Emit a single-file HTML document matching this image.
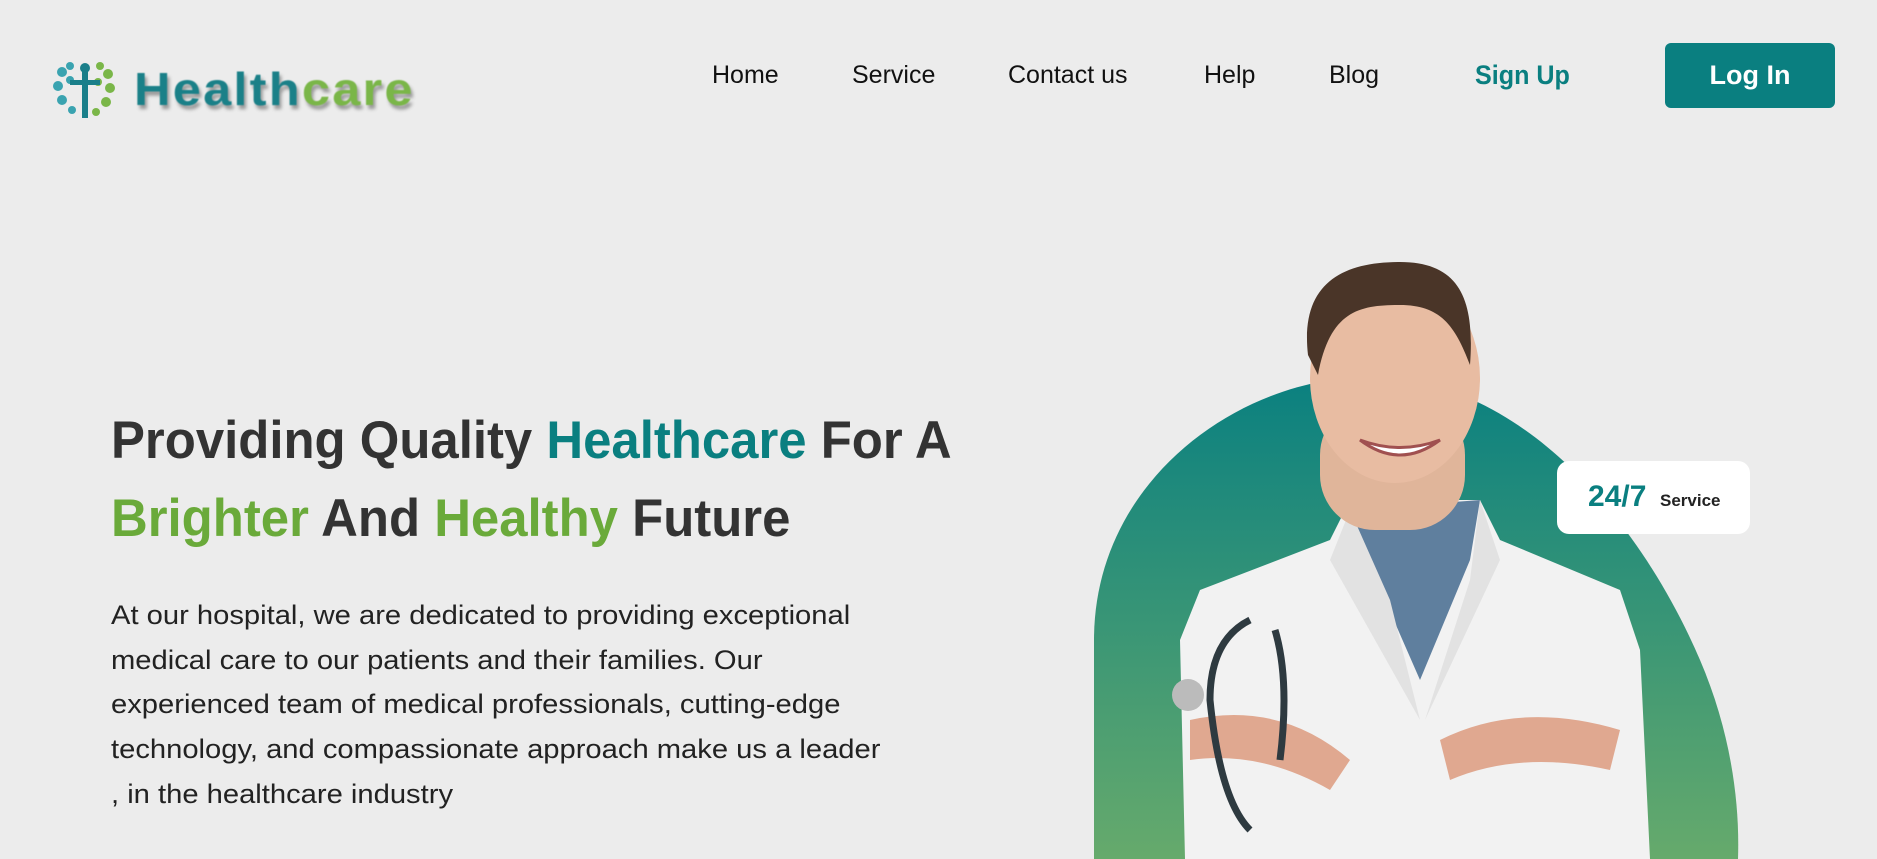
<!DOCTYPE html>
<html><head><meta charset="utf-8"><style>
html,body{margin:0;padding:0;width:1877px;height:859px;overflow:hidden;background:#ececec;font-family:"Liberation Sans",sans-serif;}
.nav a{position:absolute;top:61px;font-size:25px;color:#111;text-decoration:none;transform:scaleX(1);transform-origin:left;}
.su{color:#0a7f80 !important;font-weight:bold;font-size:27px !important;top:60px !important;transform:scaleX(0.93) !important}
.btn{position:absolute;left:1665px;top:43px;width:170px;height:65px;background:#0a7f80;border-radius:6px;color:#fff;font-weight:bold;font-size:27px;text-align:center;line-height:65px;}
h1{position:absolute;left:111px;top:402px;margin:0;font-size:53px;line-height:78px;color:#333;white-space:nowrap;transform:scaleX(0.96);transform-origin:left;font-weight:bold;}
.t{color:#0a7f80}.g{color:#6aaa3a}
p{position:absolute;left:111px;top:593px;margin:0;font-size:27px;line-height:44.7px;color:#222;white-space:nowrap;transform:scaleX(1.08);transform-origin:left;}
</style></head><body>
<svg style="position:absolute;left:50px;top:58px" width="70" height="65" viewBox="0 0 70 65">
<g fill="#3aa3b0"><circle cx="12" cy="14" r="5"/><circle cx="8" cy="28" r="5"/><circle cx="12" cy="42" r="5"/><circle cx="20" cy="8" r="4"/><circle cx="22" cy="52" r="4"/><circle cx="20" cy="22" r="4"/></g>
<g fill="#7ab648"><circle cx="50" cy="8" r="4"/><circle cx="58" cy="16" r="5"/><circle cx="60" cy="30" r="5"/><circle cx="56" cy="44" r="5"/><circle cx="46" cy="54" r="4"/><circle cx="48" cy="24" r="4"/></g>
<rect x="32" y="10" width="6" height="50" fill="#1a7f8a"/><rect x="20" y="22" width="30" height="5" fill="#1a7f8a"/><circle cx="35" cy="10" r="5" fill="#1a7f8a"/>
</svg>
<div style="position:absolute;left:134px;top:62px;font-size:46px;font-weight:bold;letter-spacing:2px;transform:scaleX(1.1);transform-origin:left;text-shadow:2px 4px 3px #999;filter:blur(0.6px)"><span style="color:#1a8088">Health</span><span style="color:#7ab648">care</span></div>
<div class="nav">
<a style="left:712px">Home</a><a style="left:852px">Service</a><a style="left:1008px">Contact us</a><a style="left:1204px">Help</a><a style="left:1329px">Blog</a><a class="su" style="left:1475px">Sign Up</a>
</div>
<div class="btn">Log In</div>
<h1>Providing Quality <span class="t">Healthcare</span> For A<br><span class="g">Brighter</span> And <span class="g">Healthy</span> Future</h1>
<p>At our hospital, we are dedicated to providing exceptional<br>medical care to our patients and their families. Our<br>experienced team of medical professionals, cutting-edge<br>technology, and compassionate approach make us a leader<br>, in the healthcare industry</p>
<svg style="position:absolute;left:0;top:0" width="1877" height="859">
<defs><linearGradient id="bg" x1="0" y1="0" x2="0" y2="1"><stop offset="0" stop-color="#0a8080"/><stop offset="1" stop-color="#66aa6c"/></linearGradient></defs>
<path d="M1094 859 L1094 640 C1094 480 1240 377 1370 377 C1520 377 1640 520 1700 660 C1730 730 1740 800 1738 859 Z" fill="url(#bg)"/>
<path d="M1350 500 L1480 500 L1500 540 L1620 590 L1640 650 L1650 859 L1185 859 L1180 640 L1200 590 L1330 540 Z" fill="#f2f2f2"/>
<path d="M1350 510 L1480 500 L1470 560 L1420 680 L1385 600 Z" fill="#5f7f9e"/>
<path d="M1350 510 L1330 560 L1420 720 L1390 600 Z M1480 500 L1500 560 L1425 720 L1470 580 Z" fill="#e2e2e2"/>
<rect x="1320" y="400" width="145" height="130" rx="55" fill="#e0b59a"/>
<ellipse cx="1395" cy="378" rx="85" ry="105" fill="#e8bca2"/>
<path d="M1308 355 C1300 285 1340 262 1400 262 C1460 262 1475 300 1470 365 C1455 325 1440 305 1400 305 C1360 305 1330 310 1318 375 Z" fill="#4a3528"/>
<path d="M1360 440 Q1400 470 1440 440 Q1400 455 1360 440 Z" fill="#fff" stroke="#a05050" stroke-width="3"/>
<path d="M1190 720 Q1280 700 1350 760 L1330 790 Q1260 750 1190 760 Z M1440 740 Q1520 700 1620 730 L1610 770 Q1520 750 1450 780 Z" fill="#e0a890"/>
<path d="M1250 620 Q1210 640 1210 700 Q1220 800 1250 830 M1275 630 Q1290 680 1280 760" fill="none" stroke="#2e3a40" stroke-width="7"/>
<circle cx="1188" cy="695" r="16" fill="#bbb"/>
<rect x="1557" y="461" width="193" height="73" rx="12" fill="#fff"/>
<text x="1588" y="506" font-family="Liberation Sans" font-weight="bold" font-size="30" fill="#0a7f80">24/7</text>
<text x="1660" y="506" font-family="Liberation Sans" font-weight="bold" font-size="17" fill="#222">Service</text>
</svg>
</body></html>
